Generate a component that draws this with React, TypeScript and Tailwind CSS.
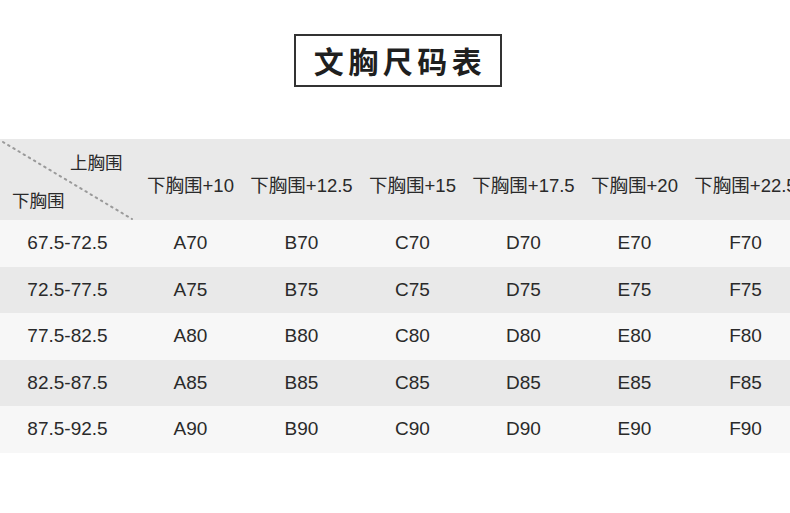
import React from "react";

const cols = ["下胸围+10", "下胸围+12.5", "下胸围+15", "下胸围+17.5", "下胸围+20", "下胸围+22.5"];
const rows = [
  ["67.5-72.5", "A70", "B70", "C70", "D70", "E70", "F70"],
  ["72.5-77.5", "A75", "B75", "C75", "D75", "E75", "F75"],
  ["77.5-82.5", "A80", "B80", "C80", "D80", "E80", "F80"],
  ["82.5-87.5", "A85", "B85", "C85", "D85", "E85", "F85"],
  ["87.5-92.5", "A90", "B90", "C90", "D90", "E90", "F90"],
];

const font = { fontFamily: '"Liberation Sans", "Noto Sans CJK SC", sans-serif' };

export default function App() {
  return (
    <div className="w-[790px] h-[513px] bg-white overflow-hidden text-[#2a2a2a]" style={font}>
      <div className="flex justify-center pt-[34px] pl-[6px]">
        <div className="w-[208px] h-[53px] border-2 border-[#333] flex items-center justify-center pt-[5px] pl-[4px]">
          <span className="text-[30px] font-bold tracking-[4.5px] text-[#1f1f1f] leading-none">文胸尺码表</span>
        </div>
      </div>
      <div className="mt-[52px] w-[801px]">
        <div className="flex h-[81px] bg-[#e9e9e9]">
          <div className="relative w-[135px] shrink-0">
            <svg className="absolute left-0 top-0" width="135" height="81">
              <line x1="3" y1="3" x2="132" y2="80" stroke="#9a9a9a" strokeWidth="2" strokeDasharray="1.5 4.5" strokeLinecap="round" />
            </svg>
            <span className="absolute left-[70px] top-[16px] text-[17.5px] leading-none">上胸围</span>
            <span className="absolute left-[12px] top-[54px] text-[17.5px] leading-none">下胸围</span>
          </div>
          {cols.map((c) => (
            <div key={c} className="w-[111px] shrink-0 flex items-center justify-center pt-[12px] text-[18.5px] whitespace-nowrap">
              {c}
            </div>
          ))}
        </div>
        {rows.map((r, i) => (
          <div key={r[0]} className={`flex h-[46.6px] ${i % 2 === 0 ? "bg-[#f7f7f7]" : "bg-[#e9e9e9]"}`}>
            {r.map((cell, j) => (
              <div
                key={j}
                className={`${j === 0 ? "w-[135px]" : "w-[111px]"} shrink-0 flex items-center justify-center text-[19px]`}
              >
                {cell}
              </div>
            ))}
          </div>
        ))}
      </div>
    </div>
  );
}
